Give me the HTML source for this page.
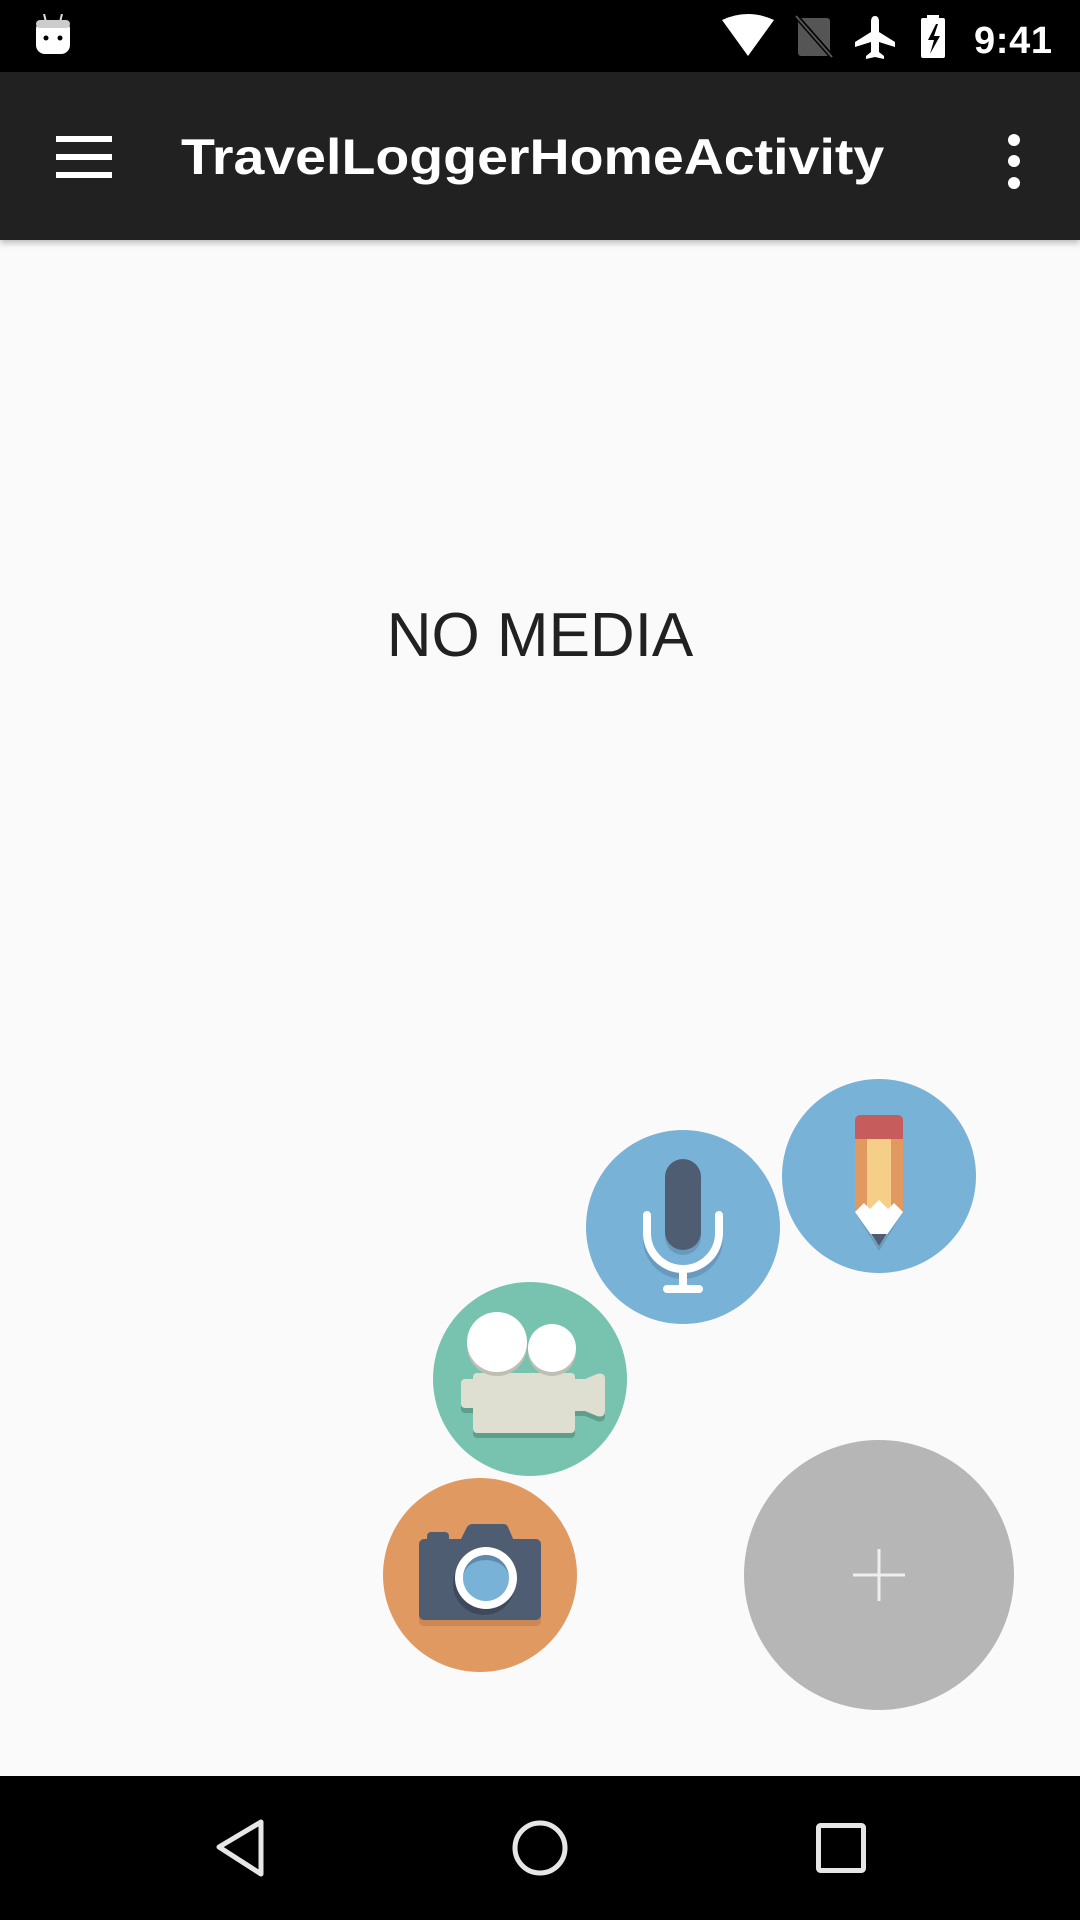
<!DOCTYPE html>
<html><head><meta charset="utf-8"><style>
body{margin:0;width:1080px;height:1920px;background:#FAFAFA;position:relative;overflow:hidden;font-family:"Liberation Sans",sans-serif}
.sb{position:absolute;left:0;top:0;width:1080px;height:72px;background:#000}
.tb{position:absolute;left:0;top:72px;width:1080px;height:168px;background:#212121;box-shadow:0 3px 6px rgba(0,0,0,.25)}
.title{position:absolute;left:181px;top:55px;color:#fff;font-size:50px;font-weight:bold;line-height:60px;white-space:nowrap;transform:scaleX(1.11);transform-origin:0 0}
.nm{position:absolute;left:0;width:1080px;top:600px;text-align:center;color:#212121;font-size:62px;line-height:72px}
.nav{position:absolute;left:0;top:1776px;width:1080px;height:144px;background:#000}
svg{position:absolute}
</style></head><body>
<div class="sb">
<svg style="left:34px;top:14px" width="40" height="42" viewBox="0 0 40 42"><line x1="10" y1="0" x2="12" y2="8" stroke="#ddd" stroke-width="2"/><line x1="28" y1="0" x2="26" y2="8" stroke="#ddd" stroke-width="2"/><rect x="2" y="6" width="34" height="34" rx="9" fill="#fff"/><rect x="2" y="6" width="34" height="8" rx="4" fill="#ccc"/><circle cx="12" cy="24" r="2.5" fill="#000"/><circle cx="26" cy="24" r="2.5" fill="#000"/></svg>
<svg style="left:720px;top:14px" width="336" height="46" viewBox="0 0 336 46">
<path d="M2 6 Q28 -6 54 6 L28 42 Z" fill="#fff"/>
<rect x="78" y="4" width="32" height="38" rx="3" fill="#555"/><line x1="77" y1="3" x2="113" y2="44" stroke="#000" stroke-width="5"/><line x1="76" y1="2" x2="112" y2="43" stroke="#555" stroke-width="2"/>
<path d="M155 2 q4 0 4 6 v10 l16 10 v5 l-16 -5 v10 l5 4 v3 l-9 -2 l-9 2 v-3 l5 -4 v-10 l-16 5 v-5 l16 -10 v-10 q0 -6 4 -6z" fill="#fff"/>
<rect x="201" y="4" width="24" height="40" rx="2" fill="#fff"/><rect x="207" y="1" width="12" height="4" fill="#fff"/><path d="M216 10 l-8 16 h6 l-4 14 l10 -18 h-6 l4 -12z" fill="#000"/>
<text x="254" y="39" fill="#fff" font-size="38" font-weight="bold" font-family="Liberation Sans" textLength="78">9:41</text>
</svg>
</div>
<div class="tb">
<svg style="left:56px;top:64px" width="56" height="42"><rect y="0" width="56" height="6" fill="#fff"/><rect y="18" width="56" height="6" fill="#fff"/><rect y="36" width="56" height="6" fill="#fff"/></svg>
<div class="title">TravelLoggerHomeActivity</div>
<svg style="left:1004px;top:60px" width="20" height="60"><circle cx="10" cy="8" r="6" fill="#fff"/><circle cx="10" cy="29" r="6" fill="#fff"/><circle cx="10" cy="51" r="6" fill="#fff"/></svg>
</div>
<div class="nm">NO MEDIA</div>

<!-- pencil -->
<svg style="left:782px;top:1079px" width="194" height="194" viewBox="-97 -97 194 194">
<circle r="97" fill="#78B2D6"/>
<path d="M-24 36 L0 75 L24 36Z" fill="#5F8AAD" opacity=".6"/>
<rect x="-24" y="-61" width="48" height="28" rx="5" fill="#C75C5C"/>
<rect x="-24" y="-37" width="48" height="73" fill="#E09A61"/>
<rect x="-12" y="-37" width="24" height="73" fill="#F5CF87"/>
<path d="M-24 36 L-15 27 L-9 33 L0 24 L9 33 L15 27 L24 36 L0 70Z" fill="#fff"/>
<path d="M-8 58 L8 58 L0 70Z" fill="#4F5D73"/>
</svg>
<!-- mic -->
<svg style="left:586px;top:1130px" width="194" height="194" viewBox="-97 -97 194 194">
<circle r="97" fill="#78B2D6"/>
<rect x="-18" y="-62" width="36" height="90" rx="18" fill="#5F8AAD" opacity=".6"/>
<rect x="-18" y="-68" width="36" height="91" rx="18" fill="#4F5D73"/>
<path d="M-36 -12 V6 A36 36 0 0 0 36 6 V-12" fill="none" stroke="#5F8AAD" stroke-width="8" stroke-linecap="round" opacity=".6" transform="translate(0,6)"/>
<path d="M-36 -12 V6 A36 36 0 0 0 36 6 V-12" fill="none" stroke="#fff" stroke-width="8" stroke-linecap="round"/>
<rect x="-4" y="40" width="8" height="20" fill="#fff"/>
<rect x="-20" y="58" width="40" height="8" rx="4" fill="#fff"/>
</svg>
<!-- video -->
<svg style="left:433px;top:1282px" width="194" height="194" viewBox="-97 -97 194 194">
<circle r="97" fill="#77C3AF"/>
<g fill="#5E9E8C" transform="translate(0,5)">
<rect x="-57" y="-6" width="102" height="60" rx="4"/><rect x="-69" y="0" width="16" height="29" rx="4"/><path d="M45 0 h10 l12 -5 q8 -2 8 5 v32 q0 7 -8 5 l-12 -5 h-10z"/>
</g>
<g fill="#DEDFD0">
<rect x="-57" y="-6" width="102" height="60" rx="4"/><rect x="-69" y="0" width="16" height="29" rx="4"/><path d="M45 0 h10 l12 -5 q8 -2 8 5 v32 q0 7 -8 5 l-12 -5 h-10z"/>
</g>
<circle cx="-33" cy="-33" r="30" fill="#BDBFB2"/><circle cx="22" cy="-27" r="24" fill="#BDBFB2"/>
<circle cx="-33" cy="-37" r="30" fill="#fff"/><circle cx="22" cy="-31" r="24" fill="#fff"/>
</svg>
<!-- camera -->
<svg style="left:383px;top:1478px" width="194" height="194" viewBox="-97 -97 194 194">
<circle r="97" fill="#E09A61"/>
<rect x="-61" y="-30" width="122" height="81" rx="5" fill="#C47F4E" opacity=".7"/>
<rect x="-61" y="-36" width="122" height="81" rx="5" fill="#4F5D73"/>
<rect x="-53" y="-43" width="22" height="12" rx="4" fill="#4F5D73"/>
<path d="M-20 -34 L-13 -48 q2 -3 6 -3 h30 q4 0 5 3 L34 -34Z" fill="#4F5D73"/>
<circle cx="4" cy="9" r="31" fill="#3E4A5C"/>
<circle cx="6" cy="3" r="31" fill="#fff"/>
<circle cx="6" cy="3" r="23" fill="#78B2D6"/>
<path d="M-17 3 A23 23 0 0 1 29 3 A23 18 0 0 0 -17 3Z" fill="#5F8AAD"/>
</svg>
<!-- FAB -->
<svg style="left:742px;top:1438px" width="274" height="274" viewBox="-137 -137 274 274">
<circle r="135" fill="#B6B6B6"/>
<rect x="-26" y="-1.5" width="52" height="3" fill="#eee"/><rect x="-1.5" y="-26" width="3" height="52" fill="#eee"/>
</svg>

<div class="nav">
<svg style="left:0;top:0" width="1080" height="144">
<path d="M261 46 L219 71 L261 98Z" fill="none" stroke="#e6e6e6" stroke-width="5" stroke-linejoin="round"/>
<circle cx="540" cy="72" r="25" fill="none" stroke="#e6e6e6" stroke-width="5"/>
<rect x="818.5" y="49.5" width="45" height="45" rx="2" fill="none" stroke="#e6e6e6" stroke-width="5"/>
</svg>
</div>
</body></html>
